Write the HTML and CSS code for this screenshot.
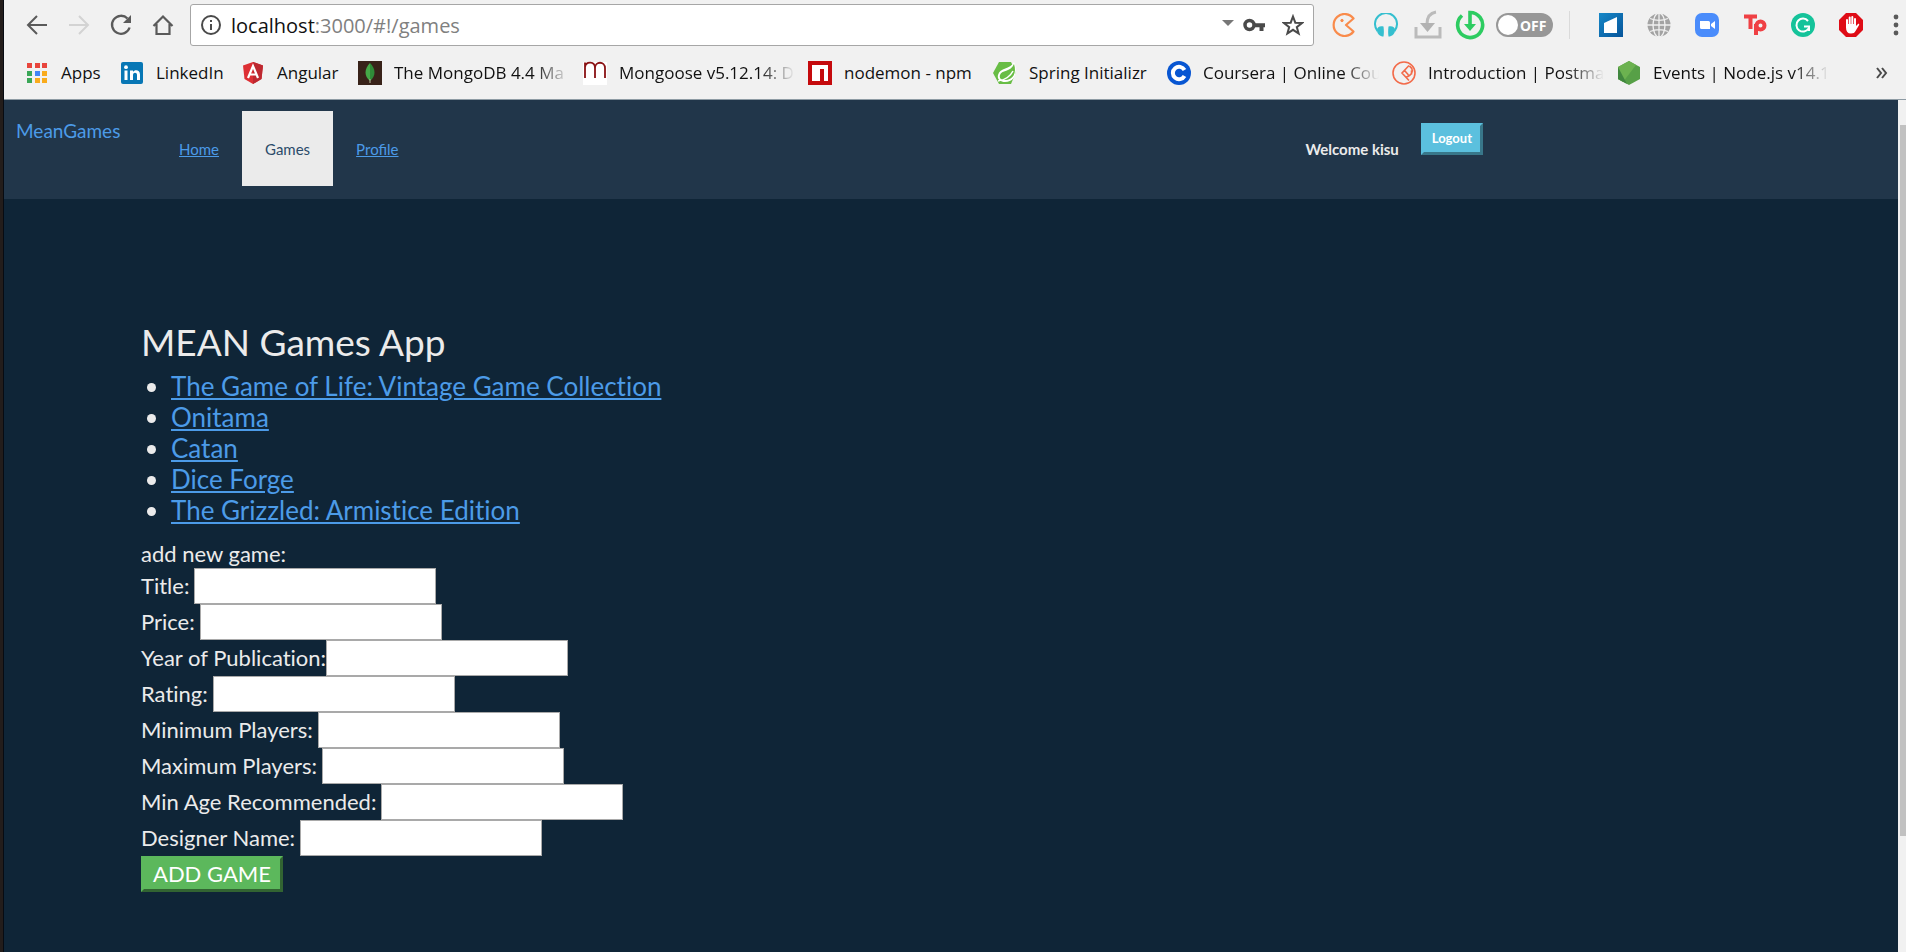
FILE: index.html
```html
<!DOCTYPE html>
<html lang="en">
<head>
<meta charset="utf-8">
<title>MEAN Games App</title>
<link rel="stylesheet" href="styles.css">
</head>
<body>
<div class="desktop-edge"></div>
<div class="browser">
  <div class="toolbar">
    <div class="nav-buttons">
      <button class="tool" aria-label="Back"><svg width="22" height="22" viewBox="0 0 22 22" fill="none" stroke="#5a5a5a" stroke-width="2"><path d="M21 11H3M11 2 2 11l9 9"/></svg></button>
      <button class="tool" aria-label="Forward"><svg width="22" height="22" viewBox="0 0 22 22" fill="none" stroke="#d3d3d3" stroke-width="2"><path d="M1 11h18M11 2l9 9-9 9"/></svg></button>
      <button class="tool" aria-label="Reload"><svg width="22" height="22" viewBox="0 0 22 22"><path d="M17.500 4.500A9 9 0 1 0 19.600 13.500" fill="none" stroke="#5a5a5a" stroke-width="2.300"/><path d="M21 1v8h-8z" fill="#5a5a5a"/></svg></button>
      <button class="tool" aria-label="Home"><svg width="22" height="22" viewBox="0 0 22 22" fill="none" stroke="#5a5a5a" stroke-width="2.200"><path d="M1.500 12 11 2.500l9.500 9.500M4.500 10v10h13V10"/></svg></button>
    </div>
    <div class="omnibox">
      <svg width="20" height="20" viewBox="0 0 20 20"><circle cx="10" cy="10" r="9" fill="none" stroke="#4a4a4a" stroke-width="2"/><path d="M9 9h2v6H9zM9 5h2v2H9z" fill="#4a4a4a"/></svg>
      <span class="url">localhost<span class="url-rest">:3000/#!/games</span></span>
      <button class="omni-caret" aria-label="History"><svg width="12" height="6" viewBox="0 0 12 6"><path d="M0 0h12L6 6z" fill="#777"/></svg></button>
      <button class="omni-key" aria-label="Passwords"><svg width="22" height="14" viewBox="0 0 22 14"><circle cx="6.500" cy="7" r="4.500" fill="none" stroke="#4a4a4a" stroke-width="3.500"/><path d="M11 5.200h11v4h-1.500V13h-4V9.200H11z" fill="#4a4a4a"/></svg></button>
      <button class="omni-star" aria-label="Bookmark"><svg width="22" height="22" viewBox="0 0 22 22"><path d="m11 2.500 2.300 6.200 6.700.3-5.200 4.100 1.800 6.400-5.600-3.700-5.600 3.700 1.800-6.400L2 9l6.700-.3z" fill="none" stroke="#4a4a4a" stroke-width="2"/></svg></button>
    </div>
    <div class="extensions">
      <button class="ext" aria-label="Game extension"><svg width="24" height="24" viewBox="0 0 24 24" fill="none" stroke="#f98b4b" stroke-width="2.200"><path d="M21.500 5.500A11 11 0 1 0 21.500 18.500L14 12z" stroke-linejoin="round"/><circle cx="10" cy="7.500" r="1.200" fill="#f98b4b" stroke-width="1"/></svg></button>
      <button class="ext" aria-label="Audio extension"><svg width="24" height="24" viewBox="0 0 24 24"><path d="M3.500 18A11 11 0 1 1 20.500 18" fill="none" stroke="#35bfcf" stroke-width="2"/><path d="M3 17c0-3 3-4.500 6.500-3.500.5 4 .5 7 0 10C6 23.500 3 21 3 17zM21 17c0-3-3-4.500-6.500-3.500-.5 4-.5 7 0 10 3.500 0 6.500-2.500 6.500-6.500z" fill="#35bfcf"/></svg></button>
      <button class="ext" aria-label="Save"><svg width="28" height="30" viewBox="0 0 28 30"><path d="M2 17v10h24V17M22 2c-6 1-9 5-9 12" fill="none" stroke="#bbb" stroke-width="3"/><path d="M6 13h15l-7.500 9z" fill="#b2b2b2"/></svg></button>
      <button class="ext" aria-label="Download"><svg width="30" height="30" viewBox="0 0 30 30"><path d="M7 5.500A12.500 12.500 0 1 0 15 2.500v14" fill="none" stroke="#2dcc61" stroke-width="3.600"/><path d="M9 14h12l-6 7z" fill="#2dcc61"/></svg></button>
      <button class="switch" aria-label="Extension off"><span class="knob"></span>OFF</button>
      <span class="divider"></span>
      <button class="ext ext-wide" aria-label="Page extension"><svg width="24" height="24" viewBox="0 0 24 24"><defs><linearGradient id="bl" x1="0" y1="0" x2="1" y2="1"><stop stop-color="#1688c8"/><stop offset="1" stop-color="#07559a"/></linearGradient></defs><path fill="url(#bl)" d="M0 0h24v24H0z"/><path d="m5 10 13-6v16H5z" fill="#fff"/></svg></button>
      <button class="ext ext-wide" aria-label="Globe"><svg width="24" height="24" viewBox="0 0 24 24"><circle cx="12" cy="12" r="11.500" fill="#a3a3a3"/><path d="M12 0v24M0 12h24M3 5.500c6 2.500 12 2.500 18 0M3 18.500c6-2.500 12-2.500 18 0" stroke="#f1f1f1" fill="none" stroke-width="1.300"/><ellipse cx="12" cy="12" rx="6" ry="12" stroke="#f1f1f1" fill="none" stroke-width="1.300"/></svg></button>
      <button class="ext ext-wide" aria-label="Meeting"><svg width="24" height="24" viewBox="0 0 24 24"><rect width="24" height="24" rx="7" fill="#4a8cfb"/><path d="M5 8h8.500q1.500 0 1.500 1.500V16H6.500Q5 16 5 14.500zM16 11l4-3v8l-4-3z" fill="#fff"/></svg></button>
      <button class="ext ext-wide" aria-label="Tp"><svg width="24" height="24" viewBox="0 0 24 24" fill="none" stroke="#ef4044" stroke-width="4"><path d="M1 3.500h13M7.500 3v13"/><path d="M13 22V11"/><circle cx="17.500" cy="12.500" r="4"/></svg></button>
      <button class="ext ext-wide" aria-label="Grammar"><svg width="24" height="24" viewBox="0 0 24 24"><circle cx="12" cy="12" r="12" fill="#15c39a"/><path d="M17 8A6.500 6.500 0 1 0 17.500 15.500M13 13.500h5v4.500" fill="none" stroke="#fff" stroke-width="2"/></svg></button>
      <button class="ext ext-wide" aria-label="Ad blocker"><svg width="24" height="24" viewBox="0 0 24 24"><path d="M7 0h10l7 7v10l-7 7H7l-7-7V7z" fill="#df0c16"/><path d="M8 13V7M10.700 12V4.500M13.300 12V4M16 13V6" stroke="#fff" stroke-width="2" stroke-linecap="round"/><path d="M7 11h10v2l2-2c1-.6 1.500.3 1 1.200L16.500 18q-1 2.500-4.500 2.500-5 0-5-6z" fill="#fff"/></svg></button>
      <button class="menu" aria-label="Menu"><svg width="6" height="22" viewBox="0 0 6 22" fill="#5a5a5a"><circle cx="3" cy="3" r="2.400"/><circle cx="3" cy="11" r="2.400"/><circle cx="3" cy="19" r="2.400"/></svg></button>
    </div>
  </div>
  <nav class="bookmarks" aria-label="Bookmarks">
    <a class="bookmark" href="#apps"><svg width="24" height="24" viewBox="0 0 24 24"><path d="M2 2h5v5H2zM10 2h5v5h-5zM17 2h5v5h-5z" fill="#e8453c"/><path d="M2 10h5v5H2zM2 17h5v5H2z" fill="#3aa757"/><path d="M10 10h5v5h-5z" fill="#4285f4"/><path d="M17 10h5v5h-5zM10 17h5v5h-5zM17 17h5v5h-5z" fill="#f9ab1c"/></svg><span>Apps</span></a>
    <a class="bookmark" href="#linkedin"><svg width="24" height="24" viewBox="0 0 24 24"><rect x="1" y="1" width="22" height="22" rx="2" fill="#0877b5"/><circle cx="6" cy="6.200" r="1.900" fill="#fff"/><path d="M4.500 9.500h3V19h-3zM10 9.500h3V11c1.500-2.500 7-2.500 7 2.500V19h-3v-5c0-3-4-3-4 0v5h-3z" fill="#fff"/></svg><span>LinkedIn</span></a>
    <a class="bookmark" href="#angular"><svg width="24" height="24" viewBox="0 0 24 24"><path d="m12 1 10 3.500L20.500 18 12 23 3.500 18 2 4.500z" fill="#dd2f34"/><path d="m12 1 10 3.500L20.500 18 12 23z" fill="#bd2830"/><path d="M7 17 12 5l5 12M9 13.500h6" fill="none" stroke="#fff" stroke-width="2.200"/></svg><span>Angular</span></a>
    <a class="bookmark" href="#mongodb"><svg width="24" height="24" viewBox="0 0 24 24"><path d="M0 0h24v24H0z" fill="#382219"/><path d="M12 2C6 8 6 15 12 20z" fill="#45a847"/><path d="M12 2c6 6 6 13 0 18z" fill="#2f8b38"/><path d="M12 18v4" stroke="#bcb89f"/></svg><span class="faded">The MongoDB 4.4 Ma</span></a>
    <a class="bookmark" href="#mongoose"><svg width="24" height="24" viewBox="0 0 24 24"><path d="M0 1h24v23H0z" fill="#fff"/><path d="M2 17V1.500M2 6c1-6 10-6 10 1v10M12 7c0-7 10-7 10 0v10" fill="none" stroke="#8a1214" stroke-width="1.800"/></svg><span class="faded">Mongoose v5.12.14: D</span></a>
    <a class="bookmark" href="#nodemon"><svg width="24" height="24" viewBox="0 0 24 24"><path d="M0 0h24v24H0z" fill="#c50a0d"/><path d="M4 4h16v16h-4V8h-4v12H4z" fill="#fff"/></svg><span>nodemon - npm</span></a>
    <a class="bookmark" href="#spring"><svg width="24" height="24" viewBox="0 0 24 24"><path d="M6 1h12l5 10-5 12H6L0 12z" fill="#68bd45"/><path d="M21 1c4 9 2 20-9 20-5 0-8-3-7-7C7 6 17 9 21 1z" fill="#fff"/><path d="M21 3c3 9-1 16-9 16-4 0-6-2-5-5 1-5 11-3 14-11z" fill="#68bd45"/><path d="M5 20c7-1 12-4 15-10" fill="none" stroke="#fff" stroke-width="1.500"/></svg><span>Spring Initializr</span></a>
    <a class="bookmark" href="#coursera"><svg width="24" height="24" viewBox="0 0 24 24"><circle cx="12" cy="12" r="12" fill="#0856d2"/><path d="M17.500 9A6.200 6.200 0 1 0 17.500 15" fill="none" stroke="#fff" stroke-width="4"/></svg><span class="faded">Coursera | Online Cou</span></a>
    <a class="bookmark" href="#postman"><svg width="24" height="24" viewBox="0 0 24 24" fill="none" stroke="#f26b4a" stroke-width="1.600"><circle cx="12" cy="12" r="11"/><path d="M17 4.500 10 12l7 7.500M10 12l2.500-2.500 4 4.500M17.500 5c4 3 3.500 7 0 9.500l-3.500 2M19.500 9.500v4"/></svg><span class="faded">Introduction | Postma</span></a>
    <a class="bookmark" href="#node"><svg width="24" height="24" viewBox="0 0 24 24"><path d="m12 0 11 6v12l-11 6-11-6V6z" fill="#57a047"/><path d="M12 0 1 6v12l5 3L19 4z" fill="#6cb250"/><path d="m1 6 9 17-9-5z" fill="#41873f"/></svg><span class="faded">Events | Node.js v14.1</span></a>
    <button class="more" aria-label="More bookmarks"><svg width="12" height="12" viewBox="0 0 12 12" fill="none" stroke="#4a4a4a" stroke-width="2"><path d="m1 1 4 5-4 5M6 1l4 5-4 5"/></svg></button>
  </nav>
  <div class="viewport">
    <div class="page">
      <header class="site-header">
        <a class="brand" href="#!/">MeanGames</a>
        <nav class="site-nav" aria-label="Main">
          <a class="site-link" href="#!/home">Home</a>
          <a class="site-link active" href="#!/games" aria-current="page">Games</a>
          <a class="site-link" href="#!/profile">Profile</a>
        </nav>
        <div class="account">
          <span class="welcome">Welcome kisu</span>
          <button class="logout">Logout</button>
        </div>
      </header>
      <main class="content">
        <h1>MEAN Games App</h1>
        <ul class="games">
          <li><a href="#!/game/1">The Game of Life: Vintage Game Collection</a></li>
          <li><a href="#!/game/2">Onitama</a></li>
          <li><a href="#!/game/3">Catan</a></li>
          <li><a href="#!/game/4">Dice Forge</a></li>
          <li><a href="#!/game/5">The Grizzled: Armistice Edition</a></li>
        </ul>
        <form class="add-form">
          <p class="form-title">add new game:</p>
          <div class="field"><label for="title">Title:</label><input id="title" type="text"></div>
          <div class="field"><label for="price">Price:</label><input id="price" type="text"></div>
          <div class="field field-tight"><label for="year">Year of Publication:</label><input id="year" type="text"></div>
          <div class="field"><label for="rating">Rating:</label><input id="rating" type="text"></div>
          <div class="field"><label for="minp">Minimum Players:</label><input id="minp" type="text"></div>
          <div class="field"><label for="maxp">Maximum Players:</label><input id="maxp" type="text"></div>
          <div class="field"><label for="age">Min Age Recommended:</label><input id="age" type="text"></div>
          <div class="field"><label for="designer">Designer Name:</label><input id="designer" type="text"></div>
          <button class="add" type="button">ADD GAME</button>
        </form>
      </main>
    </div>
    <div class="scrollbar"><div class="thumb"></div></div>
  </div>
</div>
</body>
</html>
```
FILE: styles.css
```css
* { box-sizing: border-box; }

body {
  margin: 0;
  min-height: 100vh;
  display: flex;
  background: #0f2537;
  font-family: Lato, "Liberation Sans", sans-serif;
}

button {
  margin: 0;
  padding: 0;
  border: 0;
  background: none;
  font-family: inherit;
}

svg { display: block; flex: none; }

.desktop-edge {
  flex: none;
  width: 4px;
  background: #231d1b;
  border-right: 1px solid #070b12;
}

.browser {
  flex: 1;
  min-width: 0;
  display: flex;
  flex-direction: column;
}

/* Browser toolbar */
.toolbar {
  display: flex;
  align-items: center;
  height: 50px;
  padding-left: 12px;
  background: #f1f1f1;
}

.nav-buttons { display: flex; width: 174px; }

.tool,
.ext {
  display: flex;
  align-items: center;
  justify-content: center;
  width: 42px;
  height: 36px;
}

.ext-wide { width: 48px; }

.omnibox {
  flex: 1;
  display: flex;
  align-items: center;
  height: 42px;
  padding: 0 9px 0 10px;
  border: 1px solid #a6a6a6;
  border-radius: 3px;
  background: #fff;
}

.url {
  flex: 1;
  margin-left: 10px;
  color: #111;
  font: 20px "Open Sans", "Noto Sans", sans-serif;
}

.url-rest { color: #808080; }
.omni-caret { margin: 0 9px 4px 0; }
.omni-key { margin-right: 17px; }

.extensions {
  display: flex;
  align-items: center;
  padding-left: 9px;
}

.switch {
  display: flex;
  align-items: center;
  gap: 2px;
  width: 57px;
  height: 24px;
  margin: 0 16px 0 5px;
  padding: 2px;
  border-radius: 12px;
  background: #979797;
  color: #fff;
  font: 700 14px "Noto Sans", "Open Sans", sans-serif;
}

.knob {
  width: 20px;
  height: 20px;
  border-radius: 50%;
  background: #fff;
}

.divider {
  width: 1px;
  height: 28px;
  margin-right: 17px;
  background: #dadada;
}

.menu {
  display: flex;
  justify-content: flex-end;
  width: 31px;
  padding-right: 7px;
}

/* Bookmarks bar */
.bookmarks {
  display: grid;
  grid-template-columns: 95px 121px 117px 225px 225px 185px 174px 225px 225px 225px 1fr;
  align-items: center;
  height: 50px;
  padding: 0 18px 4px 21px;
  background: #f1f1f1;
  border-bottom: 1px solid #8e9ba4;
}

.bookmark {
  display: flex;
  align-items: center;
  gap: 12px;
  color: #111;
  font: 17px/24px "Open Sans", "Noto Sans", sans-serif;
  text-decoration: none;
  white-space: nowrap;
}

.faded {
  -webkit-mask-image: linear-gradient(to right, #000 140px, transparent 176px);
  mask-image: linear-gradient(to right, #000 140px, transparent 176px);
}

.more { justify-self: end; }

/* Page */
.viewport {
  flex: 1;
  display: flex;
}

.page {
  flex: 1;
  min-width: 0;
  background: #0f2537;
  color: #ebebeb;
}

.site-header {
  display: flex;
  align-items: flex-start;
  min-height: 99px;
  padding: 11px 12px;
  background: #21364a;
}

.brand {
  width: 140px;
  padding-top: 8px;
  color: #4c9be8;
  font-size: 19px;
  line-height: 24px;
  text-decoration: none;
}

.site-nav { display: flex; }

.site-link {
  padding: 26px 23px 25px;
  color: #4c9be8;
  font-size: 15px;
  line-height: 24px;
}

.site-link.active {
  background: #ebebeb;
  color: #2b4b6a;
  text-decoration: none;
}

.account {
  display: flex;
  align-items: flex-start;
  gap: 22px;
  margin-left: auto;
  margin-right: 403px;
  padding-top: 12px;
}

.welcome {
  padding-top: 14px;
  font-size: 15px;
  line-height: 24px;
  font-weight: 700;
}

.logout {
  height: 32px;
  padding: 0 8px 2px;
  border: 3px outset #5bc0de;
  background: #5bc0de;
  color: #fff;
  font-size: 13px;
  font-weight: 700;
}

.content {
  padding: 119px 137px 60px;
  font-variant-ligatures: none;
}

h1 {
  margin: 0;
  font-size: 37px;
  line-height: 48px;
  font-weight: 400;
}

.games {
  margin: 5px 0 15px;
  padding-left: 30px;
  font-size: 26px;
  line-height: 31px;
}

.games a { color: #4c9be8; }

.form-title {
  margin: 0 0 1px;
  font-size: 22px;
  line-height: 26px;
}

.field {
  display: flex;
  align-items: center;
  gap: 5px;
  font-size: 22px;
  line-height: 26px;
}

.field-tight { gap: 0; }

.field input {
  width: 242px;
  height: 36px;
  border: 1px solid #a9a9a9;
  background: #fff;
  font: inherit;
  color: #222;
}

.add {
  height: 36px;
  padding: 0 9px;
  border: 3px outset #5cb85c;
  background: #5cb85c;
  color: #fff;
  font-size: 22px;
  line-height: 28px;
}

.scrollbar {
  flex: none;
  width: 8px;
  padding: 25px 0 116px 2px;
  background: #f1f1f1;
}

.thumb {
  height: 100%;
  background: #c1c1c1;
}
```
